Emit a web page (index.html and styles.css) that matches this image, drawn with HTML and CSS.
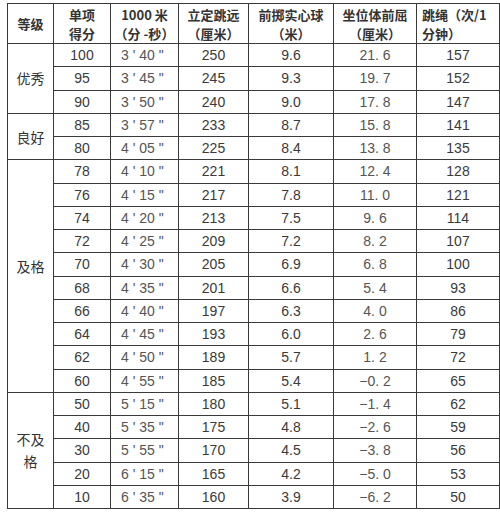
FILE: index.html
```html
<!DOCTYPE html>
<html lang="zh">
<head>
<meta charset="utf-8">
<link rel="stylesheet" href="styles.css">
</head>
<body>
<table class="score">
  <colgroup>
    <col class="c1"><col class="c2"><col class="c3"><col class="c4"><col class="c5"><col class="c6"><col class="c7">
  </colgroup>
  <thead>
    <tr>
      <th>等级</th>
      <th>单项<br>得分</th>
      <th>1000 米<br><span class="fw">（</span>分 -秒<span class="fw">）</span></th>
      <th>立定跳远<br><span class="fw">（</span>厘米<span class="fw">）</span></th>
      <th>前掷实心球<br><span class="fw">（</span>米<span class="fw">）</span></th>
      <th>坐位体前屈<br><span class="fw">（</span>厘米<span class="fw">）</span></th>
      <th class="left">跳绳<span class="fw">（</span>次/1<br>分钟<span class="fw">）</span></th>
    </tr>
  </thead>
  <tbody>
    <tr><td rowspan="3" class="grade">优秀</td><td>100</td><td class="t">3 ' 40 "</td><td>250</td><td>9.6</td><td class="m">21. 6</td><td>157</td></tr>
    <tr><td>95</td><td class="t">3 ' 45 "</td><td>245</td><td>9.3</td><td class="m">19. 7</td><td>152</td></tr>
    <tr><td>90</td><td class="t">3 ' 50 "</td><td>240</td><td>9.0</td><td class="m">17. 8</td><td>147</td></tr>
    <tr><td rowspan="2" class="grade">良好</td><td>85</td><td class="t">3 ' 57 "</td><td>233</td><td>8.7</td><td class="m">15. 8</td><td>141</td></tr>
    <tr><td>80</td><td class="t">4 ' 05 "</td><td>225</td><td>8.4</td><td class="m">13. 8</td><td>135</td></tr>
    <tr><td rowspan="10" class="grade raised">及格</td><td>78</td><td class="t">4 ' 10 "</td><td>221</td><td>8.1</td><td class="m">12. 4</td><td>128</td></tr>
    <tr><td>76</td><td class="t">4 ' 15 "</td><td>217</td><td>7.8</td><td class="m">11. 0</td><td>121</td></tr>
    <tr><td>74</td><td class="t">4 ' 20 "</td><td>213</td><td>7.5</td><td class="m">9. 6</td><td>114</td></tr>
    <tr><td>72</td><td class="t">4 ' 25 "</td><td>209</td><td>7.2</td><td class="m">8. 2</td><td>107</td></tr>
    <tr><td>70</td><td class="t">4 ' 30 "</td><td>205</td><td>6.9</td><td class="m">6. 8</td><td>100</td></tr>
    <tr><td>68</td><td class="t">4 ' 35 "</td><td>201</td><td>6.6</td><td class="m">5. 4</td><td>93</td></tr>
    <tr><td>66</td><td class="t">4 ' 40 "</td><td>197</td><td>6.3</td><td class="m">4. 0</td><td>86</td></tr>
    <tr><td>64</td><td class="t">4 ' 45 "</td><td>193</td><td>6.0</td><td class="m">2. 6</td><td>79</td></tr>
    <tr><td>62</td><td class="t">4 ' 50 "</td><td>189</td><td>5.7</td><td class="m">1. 2</td><td>72</td></tr>
    <tr><td>60</td><td class="t">4 ' 55 "</td><td>185</td><td>5.4</td><td class="m">−0. 2</td><td>65</td></tr>
    <tr><td rowspan="5" class="grade">不及<br>格</td><td>50</td><td class="t">5 ' 15 "</td><td>180</td><td>5.1</td><td class="m">−1. 4</td><td>62</td></tr>
    <tr><td>40</td><td class="t">5 ' 35 "</td><td>175</td><td>4.8</td><td class="m">−2. 6</td><td>59</td></tr>
    <tr><td>30</td><td class="t">5 ' 55 "</td><td>170</td><td>4.5</td><td class="m">−3. 8</td><td>56</td></tr>
    <tr><td>20</td><td class="t">6 ' 15 "</td><td>165</td><td>4.2</td><td class="m">−5. 0</td><td>53</td></tr>
    <tr><td>10</td><td class="t">6 ' 35 "</td><td>160</td><td>3.9</td><td class="m">−6. 2</td><td>50</td></tr>
  </tbody>
</table>
</body>
</html>
```
FILE: styles.css
```css
html, body {
  background: #ffffff;
}
body {
  margin: 3px 0 0 7px;
  font-family: "Liberation Sans", "Noto Sans CJK SC", sans-serif;
  color: #3a3a3a;
}
.score {
  border-collapse: collapse;
  table-layout: fixed;
  width: 492px;
  border: 1.5px solid #2e2e2e;
}
.c1 { width: 46px; }
.c2 { width: 57px; }
.c3 { width: 68px; }
.c4 { width: 70px; }
.c5 { width: 85px; }
.c6 { width: 83px; }
.c7 { width: 83px; }
.score th, .score td {
  border: 1px solid #3a3a3a;
  padding: 0;
  text-align: center;
  vertical-align: middle;
}
.score th {
  height: 39px;
  font-family: "Noto Sans CJK SC", sans-serif;
  font-weight: bold;
  font-size: 13px;
  line-height: 19px;
  color: #333;
  white-space: nowrap;
}
.fw {
  display: inline-block;
  width: 13px;
  text-align: center;
}
.score th.left {
  text-align: left;
  padding-left: 5px;
}
.score td {
  height: 22.25px;
  font-size: 14px;
  line-height: 16px;
}
.score td.grade {
  font-family: "Noto Sans CJK SC", sans-serif;
  font-size: 14px;
  line-height: 22px;
  color: #333;
}
.score td.raised {
  padding-bottom: 20px;
}
.score td.t {
  text-align: left;
  padding-left: 10px;
  color: #555;
}
.score td.m {
  color: #555;
}
```
